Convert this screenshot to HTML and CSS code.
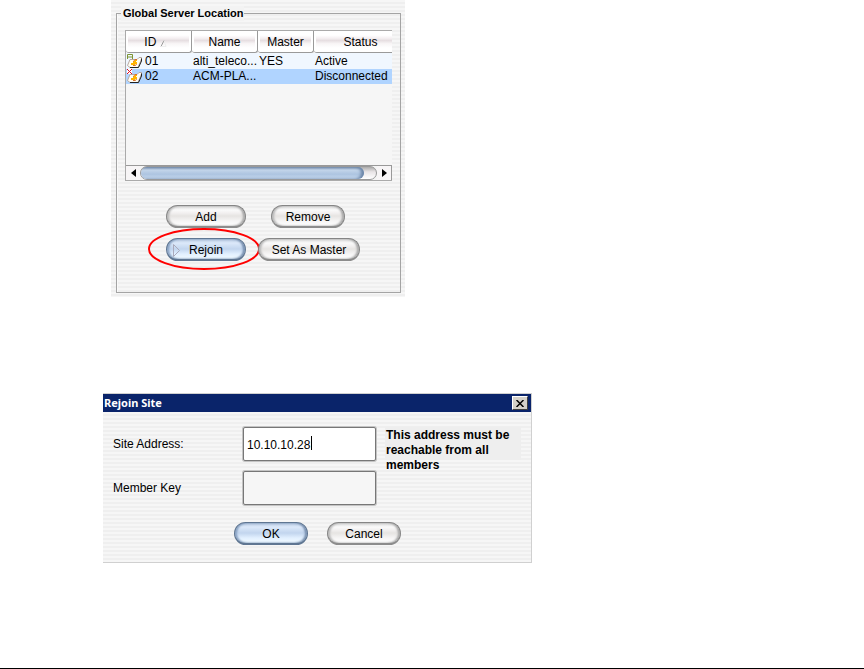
FILE: index.html
```html
<!DOCTYPE html>
<html lang="en">
<head>
	<title>Global Server Location</title>
	<meta charset="utf-8"/>
	<link rel="stylesheet" href="styles.css">
</head>
<body>

<main>
	<section class="panel striped">
		<fieldset>
			<legend>Global Server Location</legend>
			<div class="pane">
				<div class="viewport">
					<table>
						<colgroup>
							<col class="col-id"><col class="col-name"><col class="col-master"><col class="col-status">
						</colgroup>
						<thead>
							<tr>
								<th class="sorted">ID <svg class="sort" width="7" height="7" viewBox="0 0 7 7"><path d="M1 6.5L4 .5" stroke="#999" fill="none"/><path d="M4 .5L6 6.5H1" stroke="#eee" fill="none"/></svg></th>
								<th>Name</th>
								<th>Master</th>
								<th>Status</th>
							</tr>
						</thead>
						<tbody>
							<tr>
								<td><span class="site">
									<svg width="16" height="15" viewBox="0 0 16 15">
										<path d="M3 5.5H10L12 3.5H14.5V5L11 13.5H3L.5 11.5Z" fill="#fffdf4" stroke="#b8a8a0"/>
										<path d="M14.5 4.5V7L11.5 13.5H3" fill="none" stroke="#222"/>
										<path d="M4 11V9H6V7H8V6H10V7H9V8H10V10H8V11Z" fill="#ffb400"/>
										<path d="M10 5.5H8L6.5 7.5M6 11.5H8.5L9.5 10" stroke="#d8702a" fill="none"/>
										<path d="M.5 5V.5H5.5V5M1 3H5" fill="none" stroke="#7d9432"/>
									</svg>01</span></td>
								<td>alti_teleco...</td>
								<td>YES</td>
								<td>Active</td>
							</tr>
							<tr class="selected">
								<td><span class="site">
									<svg width="16" height="15" viewBox="0 0 16 15">
										<path d="M3 5.5H10L12 3.5H14.5V5L11 13.5H3L.5 11.5Z" fill="#fffdf4" stroke="#b8a8a0"/>
										<path d="M14.5 4.5V7L11.5 13.5H3" fill="none" stroke="#222"/>
										<path d="M4 11V9H6V7H8V6H10V7H9V8H10V10H8V11Z" fill="#ffb400"/>
										<path d="M10 5.5H8L6.5 7.5M6 11.5H8.5L9.5 10" stroke="#d8702a" fill="none"/>
										<path d="M0 0H5V5H0Z" fill="#fff"/>
										<path d="M0 0L5 5M5 0L0 5" fill="none" stroke="#e01020"/>
									</svg>02</span></td>
								<td>ACM-PLA...</td>
								<td></td>
								<td>Disconnected</td>
							</tr>
						</tbody>
					</table>
				</div>
				<div class="scrollbar">
					<button type="button" class="arrow" aria-label="Scroll left"><svg width="5" height="8" viewBox="0 0 5 8"><path d="M5 0V8L0 4Z"/></svg></button>
					<div class="track"><div class="thumb"></div></div>
					<button type="button" class="arrow" aria-label="Scroll right"><svg width="5" height="8" viewBox="0 0 5 8"><path d="M0 0V8L5 4Z"/></svg></button>
				</div>
			</div>
			<div class="actions">
				<div class="row spread">
					<button type="button" class="btn">Add</button>
					<button type="button" class="btn small">Remove</button>
				</div>
				<div class="row">
					<div class="marked">
						<button type="button" class="btn blue"><svg class="cue" width="7" height="13" viewBox="0 0 7 13"><path d="M.5 .5V12.5L6.5 6.5Z" fill="none" stroke="#aab"/></svg>Rejoin</button>
						<svg class="ring" width="112" height="44" viewBox="0 0 112 44"><ellipse cx="56" cy="22" rx="55" ry="20" fill="none" stroke="#f00" stroke-width="2"/></svg>
					</div>
					<button type="button" class="btn wide">Set As Master</button>
				</div>
			</div>
		</fieldset>
	</section>

	<form class="dialog">
		<header>
			<h2>Rejoin Site</h2>
			<button type="button" class="close" aria-label="Close"><svg width="8" height="7" viewBox="0 0 8 7"><path d="M.5 0L7.5 7M7.5 0L.5 7" stroke="#000" stroke-width="1.5"/></svg></button>
		</header>
		<div class="content striped">
			<div class="fields">
				<label for="address">Site Address:</label>
				<div class="caret-box"><input id="address" type="text" value="10.10.10.28"></div>
				<p class="note">This address must be reachable from all members</p>
				<label for="key">Member Key</label>
				<input id="key" class="empty" type="text">
			</div>
			<div class="row buttons">
				<button type="button" class="btn blue small">OK</button>
				<button type="button" class="btn small">Cancel</button>
			</div>
		</div>
	</form>
</main>

<hr>

</body>
</html>
```
FILE: styles.css
```css
* {
	box-sizing: border-box;
}

body {
	display: flex;
	flex-direction: column;
	min-height: 100vh;
	margin: 0;
	background: #fff;
	color: #000;
	font: 12px/15px "Liberation Sans", Arial, sans-serif;
}

main {
	flex: 1;
	padding-left: 103px;
}

hr {
	width: 100%;
	height: 1px;
	margin: 0;
	border: 0;
	background: #000;
}

button, input {
	font: inherit;
	color: inherit;
}

.striped {
	background: repeating-linear-gradient(#f6f6f6 0, #f6f6f6 2px, #efefef 2px, #efefef 4px);
}

.panel {
	width: 294px;
	margin-left: 8px;
	padding: 6px 4px 4px 5px;
}

fieldset {
	min-width: 0;
	margin: 0;
	padding: 9px 8px 31px;
	border: 1px solid #a4a4a4;
	box-shadow: inset 1px 0 #fafafa;
}

legend {
	margin-left: -4px;
	padding: 0 1px 0 2px;
	background: #f3f3f3;
	font-weight: bold;
	font-size: 11px;
	white-space: nowrap;
}

.pane {
	border: 1px solid #aaa;
	border-right: 0;
	background: #f6f6f6;
}

.viewport {
	height: 134px;
	overflow: hidden;
}

table {
	width: 282px;
	table-layout: fixed;
	border-collapse: separate;
	border-spacing: 0;
}

.col-id, .col-name {
	width: 66px;
}

.col-master {
	width: 56px;
}

th {
	height: 22px;
	padding: 1px 0 0;
	border-right: 1px solid #9a9a9a;
	border-bottom: 1px solid #9a9a9a;
	border-radius: 0 0 3px 3px;
	background: linear-gradient(#fff 0, #fff 20%, #f4eff1 35%, #e6dee1 45%, #f8f5f6 60%, #fff 80%);
	box-shadow: inset 2px 0 #fff, inset -2px 0 #fff;
	font-weight: normal;
}

.sorted {
	padding-right: 6px;
}

.sort {
	vertical-align: -1px;
}

td {
	height: 16px;
	padding: 0 0 0 1px;
	background: #f0f7ff;
	line-height: 15px;
	white-space: nowrap;
}

.selected td {
	height: 15px;
	background: #b0d4ff;
}

.site {
	display: flex;
	gap: 2px;
}

.scrollbar {
	display: flex;
	height: 15px;
	border-top: 1px solid #999;
	border-right: 1px solid #999;
	background: #f4f4f4;
}

.arrow {
	display: flex;
	align-items: center;
	justify-content: center;
	width: 14px;
	padding: 0;
	border: 0;
	background: #f7f5f6;
}

.track {
	flex: 1;
	border: 1px solid #999;
	border-radius: 7px;
	background: linear-gradient(#aaa, #e8e4e6 40%, #fff);
}

.thumb {
	width: 95%;
	height: 100%;
	border-radius: 6px;
	background: linear-gradient(#7890ae, #c3d5ea 25%, #adc4e0 60%, #c9dcf2);
	box-shadow: inset -3px 0 3px #6c86a8;
}

.actions {
	display: flex;
	flex-direction: column;
	gap: 10px;
	padding: 24px 0 0 41px;
}

.row {
	display: flex;
	gap: 12px;
}

.spread {
	gap: 25px;
}

.btn {
	position: relative;
	width: 80px;
	height: 23px;
	padding: 2px 0 0;
	border: 1px solid #858585;
	border-bottom: 2px solid #8c8c8c;
	border-radius: 12px;
	background: linear-gradient(#d8d8d8 0, #fafafa 20%, #f2f0f0 35%, #e6e4e2 50%, #f6f5f5 75%, #fff);
	box-shadow: inset 2px 0 2px #bbb, inset -2px 0 2px #aaa;
	line-height: 18px;
	white-space: nowrap;
}

.small {
	width: 74px;
}

.wide {
	width: 102px;
}

.blue {
	border-color: #5f7692;
	background: linear-gradient(#b4c6de 0, #dce9fa 20%, #cfdff4 35%, #c2d5ee 50%, #e2f0ff 75%, #f2fbff);
	box-shadow: inset 2px 0 2px #8aa3c4, inset -2px 0 2px #7890b0;
}

.marked {
	position: relative;
}

.ring {
	position: absolute;
	left: -18px;
	top: -11px;
	pointer-events: none;
}

.cue {
	position: absolute;
	left: 6px;
	top: 5px;
}

.dialog {
	width: 429px;
	margin-top: 96px;
	border: 1px solid #d0d0d0;
	border-left: 0;
}

.dialog header {
	display: flex;
	align-items: center;
	justify-content: space-between;
	height: 18px;
	padding: 0 3px 0 1px;
	background: #0a246a;
	color: #fff;
}

.dialog h2 {
	margin: 0;
	font: bold 11px/18px "Noto Sans", Tahoma, sans-serif;
}

.close {
	display: flex;
	align-items: center;
	justify-content: center;
	width: 16px;
	height: 14px;
	padding: 0;
	border: 1px solid;
	border-color: #fff #404040 #404040 #fff;
	background: #d4d0c8;
}

.content {
	padding: 15px 10px 17px;
}

.fields {
	display: grid;
	grid-template-columns: 121px 133px 1fr;
	grid-template-rows: 34px 34px;
	column-gap: 9px;
	row-gap: 10px;
	align-items: center;
}

.fields label {
	padding-top: 1px;
}

.fields input {
	display: block;
	width: 100%;
	height: 34px;
	padding: 2px 3px 0;
	border: 1px solid #777;
	border-radius: 2px;
	background: #fff;
	box-shadow: 0 0 0 1px #c4c4c4;
	outline: 0;
}

.fields .empty {
	background: #f6f6f6;
}

/* text cursor after the typed address */
.caret-box {
	position: relative;
}

.caret-box::after {
	content: "";
	position: absolute;
	left: 68px;
	top: 9px;
	width: 1px;
	height: 14px;
	background: #000;
}

.note {
	align-self: start;
	height: 33px;
	margin: 0;
	padding: 1px 0 0 1px;
	background: #eee;
	font-weight: bold;
}

.buttons {
	gap: 19px;
	margin-top: 17px;
	padding-left: 121px;
}
```
